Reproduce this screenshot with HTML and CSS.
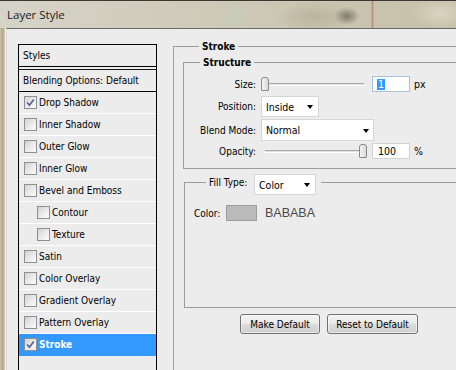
FILE: index.html
```html
<!DOCTYPE html>
<html>
<head>
<meta charset="utf-8">
<title>Layer Style</title>
<link rel="stylesheet" href="styles.css">
</head>
<body>
<div class="window">
  <div class="titlebar"><span class="title">Layer Style</span></div>
  <div class="frame">
    <div class="frame-edge"></div>
    <div class="content">
      <div class="styles-list">
        <div class="list-head">Styles</div>
        <div class="list-blend">Blending Options: Default</div>
        <div class="list-item"><span class="cb"><svg viewBox="0 0 11 11" width="11" height="11"><path d="M2.2 5.6 L4.4 8.2 L8.8 2.4" fill="none" stroke="#4d5f94" stroke-width="1.6"/></svg></span>Drop Shadow</div>
        <div class="list-item"><span class="cb"></span>Inner Shadow</div>
        <div class="list-item"><span class="cb"></span>Outer Glow</div>
        <div class="list-item"><span class="cb"></span>Inner Glow</div>
        <div class="list-item"><span class="cb"></span>Bevel and Emboss</div>
        <div class="list-item sub"><span class="cb"></span>Contour</div>
        <div class="list-item sub"><span class="cb"></span>Texture</div>
        <div class="list-item"><span class="cb"></span>Satin</div>
        <div class="list-item"><span class="cb"></span>Color Overlay</div>
        <div class="list-item"><span class="cb"></span>Gradient Overlay</div>
        <div class="list-item"><span class="cb"></span>Pattern Overlay</div>
        <div class="list-item active"><span class="cb"><svg viewBox="0 0 11 11" width="11" height="11"><path d="M2.2 5.6 L4.4 8.2 L8.8 2.4" fill="none" stroke="#4d5f94" stroke-width="1.6"/></svg></span>Stroke</div>
      </div>

      <div class="panel">
        <fieldset class="group stroke-group">
          <legend class="legend-bold legend-stroke">Stroke</legend>
          <fieldset class="group structure">
            <legend class="legend-bold legend-structure">Structure</legend>
            <div class="row row-size">
              <span class="lbl">Size:</span>
              <div class="slider"><div class="track"></div><div class="thumb" style="left:0px"></div></div>
              <div class="num focused"><span class="selected">1</span></div>
              <span class="unit">px</span>
            </div>
            <div class="row row-position">
              <span class="lbl">Position:</span>
              <div class="select select-position"><span>Inside</span><span class="arrow"></span></div>
            </div>
            <div class="row row-blend">
              <span class="lbl">Blend Mode:</span>
              <div class="select select-blend"><span>Normal</span><span class="arrow"></span></div>
            </div>
            <div class="row row-opacity">
              <span class="lbl">Opacity:</span>
              <div class="slider"><div class="track track-inset"></div><div class="thumb" style="left:98px"></div></div>
              <div class="num"><span>100</span></div>
              <span class="unit">%</span>
            </div>
          </fieldset>

          <fieldset class="group fill">
            <legend class="legend-fill">
              <span class="fill-label">Fill Type:</span>
              <div class="select select-fill"><span>Color</span><span class="arrow"></span></div>
            </legend>
            <div class="color-row">
              <span class="color-label">Color:</span>
              <span class="swatch"></span>
              <span class="hex">BABABA</span>
            </div>
          </fieldset>

          <div class="buttons">
            <button class="btn btn-make">Make Default</button>
            <button class="btn btn-reset">Reset to Default</button>
          </div>
        </fieldset>
      </div>
    </div>
  </div>
</div>
</body>
</html>
```

FILE: styles.css
```css
html, body {
  margin: 0;
  padding: 0;
}
body {
  width: 456px;
  height: 370px;
  overflow: hidden;
  background: #ececec;
  font-family: "DejaVu Sans Condensed", "DejaVu Sans", "Liberation Sans", sans-serif;
  font-stretch: condensed;
  font-size: 10px;
  color: #000;
}
.window {
  width: 456px;
  height: 370px;
  display: flex;
  flex-direction: column;
}
.titlebar {
  height: 28px;
  flex-shrink: 0;
  box-sizing: border-box;
  border-top: 1px solid #3a3833;
  padding-left: 7px;
  line-height: 27px;
  background:
    radial-gradient(ellipse 13px 9px at 347px 15px, rgba(80,76,66,0.6), rgba(80,76,66,0) 100%),
    linear-gradient(90deg, rgba(0,0,0,0) 371px, rgba(176,110,96,0.55) 372px, rgba(176,110,96,0.55) 373px, rgba(0,0,0,0) 374px),
    radial-gradient(ellipse 30px 16px at 440px 12px, rgba(220,214,196,0.9), rgba(220,214,196,0) 100%),
    radial-gradient(ellipse 40px 16px at 315px 16px, rgba(176,168,144,0.6), rgba(176,168,144,0) 100%),
    radial-gradient(ellipse 14px 16px at 236px 14px, rgba(196,206,192,0.7), rgba(196,206,192,0) 100%),
    linear-gradient(90deg, #d6d3c8 0, #cfcbba 40%, #c6c0a8 100%);
}
.title {
  font-family: "Open Sans", "Liberation Sans", sans-serif;
  font-stretch: normal;
  font-size: 11.5px;
  color: #1c1c1c;
}
.frame {
  flex: 1;
  display: flex;
  min-height: 0;
}
.frame-edge {
  width: 5px;
  flex-shrink: 0;
  border-right: 1px solid #f6f6f6;
  background: linear-gradient(90deg, #cbc4ab 0, #b4a98c 50%, #cfc8b2 100%);
}
.content {
  flex: 1;
  display: flex;
  align-items: flex-start;
  border-top: 1px solid #6a6a6a;
  border-left: 1px solid #d8d8d8;
  padding: 15px 0 0 11px;
  background: #ececec;
  overflow: hidden;
}

/* Styles list */
.styles-list {
  width: 139px;
  flex-shrink: 0;
  box-sizing: border-box;
  height: 340px;
  border: 1px solid #000;
  border-bottom: none;
}
.list-head {
  height: 21px;
  line-height: 21px;
  padding-left: 4px;
  border-bottom: 1px solid #000;
}
.list-blend {
  margin-top: 2px;
  height: 21px;
  line-height: 21px;
  padding-left: 4px;
  border-top: 1px solid #1a1a1a;
  border-bottom: 1px solid #000;
}
.list-item {
  height: 21px;
  display: flex;
  align-items: center;
  padding-left: 5px;
  border-bottom: 1px solid #ffffff;
}
.list-item.sub {
  padding-left: 18px;
}
.list-item.active {
  background: #3399ff;
  color: #fff;
  font-weight: bold;
  border-bottom-color: #3399ff;
}
.cb {
  width: 13px;
  height: 13px;
  box-sizing: border-box;
  border: 1px solid #8e8f8f;
  background: linear-gradient(135deg, #d2d2d2 0, #eeeeee 60%, #fafafa 100%);
  margin-right: 2px;
  display: flex;
  align-items: center;
  justify-content: center;
  flex-shrink: 0;
}
.cb svg {
  display: block;
}

/* Right panel */
.panel {
  flex-shrink: 0;
  margin-left: 16px;
  margin-top: -4px;
  width: 320px;
}
.group {
  margin: 0;
  border: 1px solid #9c9c9c;
  min-width: 0;
}
.stroke-group {
  width: 320px;
  box-sizing: border-box;
  height: 400px;
  padding: 3px 0 0 9px;
}
.legend-bold {
  font-weight: bold;
  line-height: 13px;
  height: 13px;
  padding: 0 3px;
  margin-left: 16px;
}
.structure {
  width: 300px;
  box-sizing: border-box;
  padding: 7px 0 9px 0;
  display: flex;
  flex-direction: column;
}
.row {
  display: flex;
  align-items: center;
}
.row-size { height: 16px; }
.row-position { height: 21px; margin-top: 4px; }
.row-blend { height: 22px; margin-top: 2px; }
.row-opacity { height: 16px; margin-top: 2px; }
.lbl {
  width: 72px;
  margin-right: 5px;
  text-align: right;
  flex-shrink: 0;
}
.slider {
  position: relative;
  width: 106px;
  height: 16px;
  flex-shrink: 0;
}
.track {
  position: absolute;
  left: 1px;
  right: 3px;
  top: 7px;
  height: 1px;
  border-top: 1px solid #a9a9a9;
  border-bottom: 1px solid #ffffff;
  background: #e2e2e2;
}
.track-inset {
  left: 4px;
}
.thumb {
  position: absolute;
  top: 1px;
  width: 6px;
  height: 12px;
  border: 1px solid #8a8a8a;
  border-radius: 3px 3px 1px 1px;
  background: linear-gradient(90deg, #f4f4f4, #d9d9d9);
}
.num {
  margin-left: 5px;
  width: 38px;
  height: 16px;
  box-sizing: border-box;
  border: 1px solid #d3d3d3;
  background: #fff;
  display: flex;
  align-items: center;
  padding-left: 5px;
  font-size: 10.5px;
}
.num.focused {
  border-color: #a9c2dc;
  padding-left: 4px;
}
.selected {
  background: #3399ff;
  color: #fff;
  padding: 0 1px;
  line-height: 11px;
  height: 11px;
  display: inline-block;
}
.unit {
  margin-left: 4px;
  font-size: 10.5px;
}
.select {
  box-sizing: border-box;
  border: 1px solid #d6d6d6;
  background: #fff;
  display: flex;
  align-items: center;
  justify-content: space-between;
  padding: 0 5px 0 4px;
  font-size: 10.5px;
  font-weight: normal;
}
.select-position { width: 58px; height: 21px; }
.select-blend { width: 113px; height: 22px; padding-right: 4px; }
.select-fill { width: 62px; height: 21px; }
.arrow {
  width: 0;
  height: 0;
  border-left: 3.5px solid transparent;
  border-right: 3.5px solid transparent;
  border-top: 4px solid #000;
  margin-top: 1px;
}

.fill {
  width: 300px;
  box-sizing: border-box;
  margin: 5px 0 0 1px;
  padding: 14px 0 86px 9px;
}
.legend-fill {
  display: flex;
  align-items: flex-start;
  height: 17px;
  padding: 0 5px 0 3px;
  margin-left: 12px;
}
.fill-label {
  width: 45px;
  margin-top: 2px;
  line-height: 13px;
}
.color-row {
  display: flex;
  align-items: center;
  height: 16px;
}
.color-label {
  width: 32px;
}
.swatch {
  width: 31px;
  height: 16px;
  box-sizing: border-box;
  border: 1px solid #9d9d9d;
  background: #bababa;
}
.hex {
  margin-left: 8px;
  font-family: "Liberation Sans", sans-serif;
  font-stretch: normal;
  font-size: 12.5px;
  color: #4a4a4a;
}

.buttons {
  display: flex;
  gap: 7px;
  margin: 6px 0 0 57px;
}
.btn {
  height: 20px;
  margin: 0;
  padding: 0;
  box-sizing: border-box;
  border: 1px solid #707070;
  border-radius: 3px;
  background: linear-gradient(180deg, #f3f3f3 0, #ebebeb 45%, #dddddd 50%, #cfcfcf 100%);
  box-shadow: inset 0 0 0 1px rgba(255,255,255,0.6);
  font-family: "DejaVu Sans Condensed", "DejaVu Sans", "Liberation Sans", sans-serif;
  font-stretch: condensed;
  font-size: 10px;
  color: #000;
}
.btn-make { width: 80px; }
.btn-reset { width: 91px; }
```
